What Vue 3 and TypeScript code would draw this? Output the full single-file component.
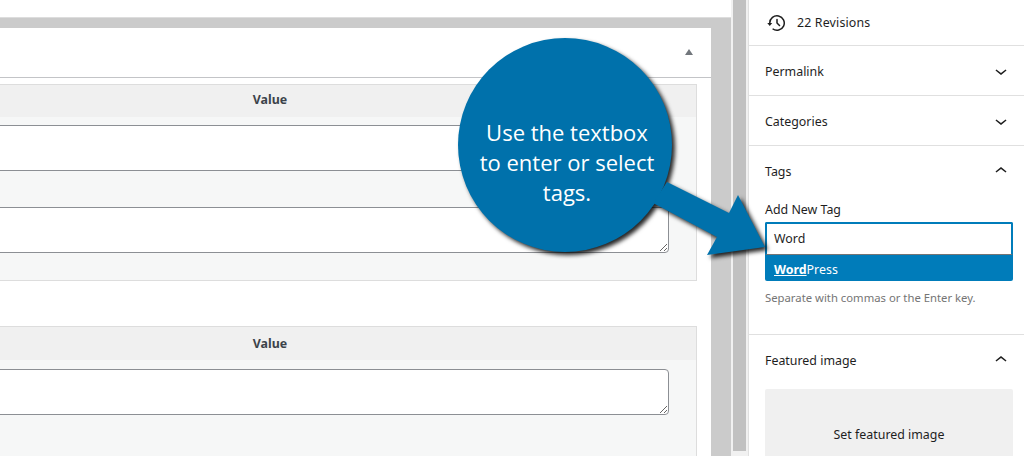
<script setup lang="ts">
const panels = [
  { name: 'Permalink', open: false },
  { name: 'Categories', open: false },
]
</script>

<template>
  <div class="page">
    <main class="main">
      <div class="topbar"></div>
      <div class="canvas">
        <section class="card">
          <header class="card-head">
            <svg class="toggle" width="8" height="6" viewBox="0 0 8 6"><path d="M4 0l4 6H0z" fill="#72777c" /></svg>
          </header>
          <div class="fields first">
            <div class="th">Value</div>
            <div class="body">
              <textarea class="ta" rows="2"></textarea>
              <div class="gap"></div>
              <textarea class="ta" rows="2"></textarea>
            </div>
          </div>
          <div class="fields second">
            <div class="th">Value</div>
            <div class="body">
              <textarea class="ta" rows="2"></textarea>
            </div>
          </div>
        </section>
      </div>
    </main>

    <div class="scrollbar"><div class="thumb"></div></div>

    <aside class="side">
      <div class="revisions">
        <svg width="24" height="24" viewBox="0 0 24 24" fill="#1e1e1e"><path d="M5.5 12h1.75l-2.5 3-2.5-3H4a8 8 0 113.134 6.35l.907-1.194A6.5 6.5 0 105.5 12zm9.53 1.97l-2.28-2.28V8.5a.75.75 0 00-1.5 0V12a.747.747 0 00.218.529l2.5 2.5a.75.75 0 101.06-1.06z" /></svg>
        <span class="rev-label">22 Revisions</span>
      </div>
      <div v-for="p in panels" :key="p.name" class="panel-row">
        <span class="label">{{ p.name }}</span>
        <svg class="chev" width="24" height="24" viewBox="0 0 24 24" fill="#1e1e1e"><path d="M17.5 11.6L12 16l-5.5-4.4.9-1.2L12 14l4.6-3.6.9 1.2z" /></svg>
      </div>
      <div class="panel tags">
        <div class="panel-title">
          <span class="label">Tags</span>
          <svg class="chev" width="24" height="24" viewBox="0 0 24 24" fill="#1e1e1e"><path d="M6.5 12.4L12 8l5.5 4.4-.9 1.2L12 10l-4.6 3.6-.9-1.2z" /></svg>
        </div>
        <label class="tag-label">Add New Tag</label>
        <div class="combo">
          <div class="combo-input">Word</div>
          <div class="combo-item"><b>Word</b>Press</div>
        </div>
        <p class="help">Separate with commas or the Enter key.</p>
      </div>
      <div class="panel featured">
        <div class="panel-title">
          <span class="label">Featured image</span>
          <svg class="chev" width="24" height="24" viewBox="0 0 24 24" fill="#1e1e1e"><path d="M6.5 12.4L12 8l5.5 4.4-.9 1.2L12 10l-4.6 3.6-.9-1.2z" /></svg>
        </div>
        <div class="set-image">Set featured image</div>
      </div>
    </aside>

    <div class="callout">
      <svg class="bubble" width="320" height="230" viewBox="450 30 320 230">
        <g fill="#0071ab">
          <circle cx="565" cy="145" r="107" />
          <polygon points="667,182 729,213 738,195 765,247 707,255 717,237 653,203" />
        </g>
      </svg>
      <div class="callout-text">Use the textbox<br />to enter or select<br />tags.</div>
    </div>
  </div>
</template>

<style>
html, body { margin: 0; background: #fff; }
</style>

<style scoped>
.page {
  position: relative;
  display: flex;
  width: 1024px;
  height: 456px;
  overflow: hidden;
  background: #fff;
  font-family: "Noto Sans", sans-serif;
  font-size: 12.4px;
  color: #1e1e1e;
}
.main { width: 731px; flex: none; display: flex; flex-direction: column; }
.topbar { height: 17px; flex: none; background: #fff; border-bottom: 1px solid #ddd; }
.canvas { flex: 1; min-height: 0; background: #cbcbcb; padding: 10px 20px 0 0; overflow: hidden; }
.card { background: #fff; height: 100%; padding: 0 14px 0 0; box-sizing: border-box; }
.card-head {
  height: 49px;
  margin-right: -14px;
  border-bottom: 1px solid #c3c4c7;
  display: flex;
  justify-content: flex-end;
  padding-right: 18px;
}
.toggle { margin-top: 21px; }
.fields { background: #f6f7f7; border: 1px solid #ddd; border-left: 0; }
.first { margin-top: 6px; height: 195px; }
.second { margin-top: 45px; height: 200px; }
.th {
  background: #f0f0f0;
  text-align: center;
  font-weight: 700;
  color: #3c434a;
  padding-right: 156px;
}
.first .th { height: 32px; line-height: 29px; }
.second .th { height: 33px; line-height: 34px; }
.body { padding: 8px 27px 0 0; }
.second .body { padding-top: 9px; }
.ta {
  display: block;
  box-sizing: border-box;
  width: calc(100% + 4px);
  margin-left: -4px;
  height: 46px;
  padding: 6px 8px;
  background: #fff;
  border: 1px solid #8c8f94;
  border-radius: 4px;
  outline: none;
  resize: vertical;
}
.gap { height: 36px; }
.scrollbar {
  width: 18px;
  flex: none;
  box-sizing: border-box;
  background: #f1f1f1;
  padding: 0 2px;
  border-right: 1px solid #e0e0e0;
}
.thumb { height: 451px; width: 13px; background: #c1c1c1; }
.side { flex: 1; min-width: 0; }
.revisions {
  height: 45px;
  display: flex;
  align-items: center;
  padding-left: 16px;
  gap: 8px;
  border-bottom: 1px solid #e0e0e0;
}
.rev-label { padding-bottom: 1px; letter-spacing: 0.15px; }
.label { padding-top: 1px; }
.panel-row {
  height: 49px;
  display: flex;
  align-items: center;
  justify-content: space-between;
  padding: 0 11px 0 16px;
  border-bottom: 1px solid #e0e0e0;
}
.panel { padding: 0 11px 0 16px; }
.tags { height: 188px; border-bottom: 1px solid #e0e0e0; }
.panel-title {
  height: 49px;
  display: flex;
  align-items: center;
  justify-content: space-between;
}
.chev { display: block; }
.tag-label { display: block; height: 27px; line-height: 29px; }
.combo { width: 248px; }
.combo-input {
  box-sizing: border-box;
  height: 33px;
  line-height: 29px;
  padding-left: 7px;
  border: 2px solid #007cba;
  border-bottom: 1px solid #757575;
  border-radius: 2px 2px 0 0;
  background: #fff;
}
.combo-item {
  height: 26px;
  line-height: 29px;
  padding-left: 9px;
  background: #007cba;
  color: #fff;
  border-radius: 0 0 2px 2px;
}
.combo-item b { text-decoration: underline; font-weight: 700; }
.help { margin: 8px 0 0; font-size: 11.3px; line-height: 18px; color: #757575; }
.set-image {
  width: 248px;
  height: 90px;
  margin-top: 5px;
  background: #f0f0f0;
  border-radius: 2px;
  display: flex;
  align-items: center;
  justify-content: center;
}
.callout { position: absolute; left: 450px; top: 30px; width: 320px; height: 230px; pointer-events: none; }
.bubble { display: block; filter: drop-shadow(3px 3px 2px rgba(0, 0, 0, 0.85)); }
.callout-text {
  position: absolute;
  left: 17px;
  top: 87px;
  width: 200px;
  text-align: center;
  color: #fff;
  font-family: "Open Sans", sans-serif;
  font-size: 22px;
  line-height: 30px;
}
</style>
